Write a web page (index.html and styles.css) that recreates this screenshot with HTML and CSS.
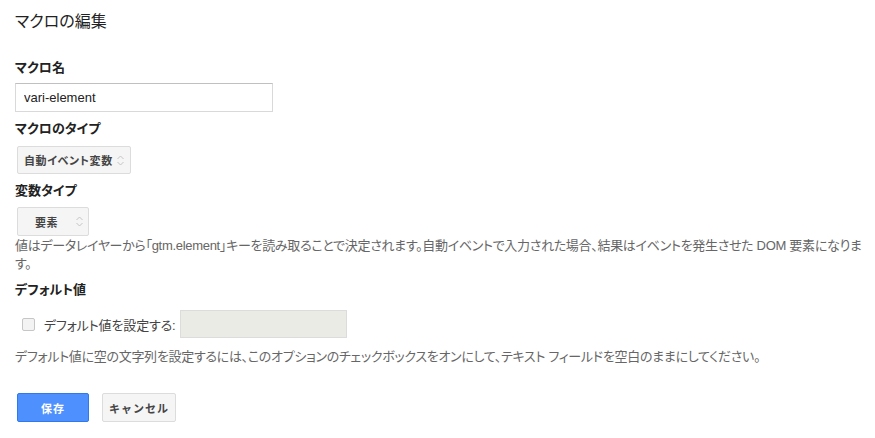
FILE: index.html
```html
<!DOCTYPE html>
<html lang="ja">
<head>
    <meta charset="UTF-8">
    <meta name="viewport" content="width=device-width, initial-scale=1.0">
    <title>マクロの編集</title>
    <link rel="stylesheet" href="styles.css">
</head>
<body>
    <div class="page">
        <h1 class="page-title">マクロの編集</h1>

        <div class="field-label first">マクロ名</div>
        <input class="text-input" type="text" value="vari-element">

        <div class="field-label">マクロのタイプ</div>
        <div class="select-button type-select">
            <span>自動イベント変数</span>
            <svg class="arrows" width="7" height="11" viewBox="0 0 7 11">
                <path d="M0.5 4 L3.5 1 L6.5 4 M0.5 7 L3.5 10 L6.5 7" fill="none" stroke="#c4c4c4" stroke-width="1"/>
            </svg>
        </div>

        <div class="field-label">変数タイプ</div>
        <div class="select-button var-select">
            <span>要素</span>
            <svg class="arrows" width="7" height="11" viewBox="0 0 7 11">
                <path d="M0.5 4 L3.5 1 L6.5 4 M0.5 7 L3.5 10 L6.5 7" fill="none" stroke="#c4c4c4" stroke-width="1"/>
            </svg>
        </div>
        <p class="description">値はデータレイヤーから「gtm.element」キーを読み取ることで決定されます。自動イベントで入力された場合、結果はイベントを発生させた DOM 要素になりま<br>す。</p>

        <div class="field-label">デフォルト値</div>
        <div class="default-row">
            <span class="checkbox"></span>
            <span class="default-label">デフォルト値を設定する:</span>
            <input class="text-input disabled-input" type="text" disabled>
        </div>
        <p class="help">デフォルト値に空の文字列を設定するには、このオプションのチェックボックスをオンにして、テキスト フィールドを空白のままにしてください。</p>

        <div class="actions">
            <button class="btn btn-primary">保存</button>
            <button class="btn btn-default">キャンセル</button>
        </div>
    </div>
</body>
</html>
```

FILE: styles.css
```css
body {
    margin: 0;
    padding: 0;
    background-color: #fff;
    font-family: "Liberation Sans", "Noto Sans CJK JP", sans-serif;
    font-feature-settings: "palt";
    color: #222;
}

.page {
    padding: 12px 10px 0 15px;
}

.page-title {
    margin: 0;
    font-size: 16px;
    line-height: 20px;
    font-weight: normal;
    color: #222;
}

.field-label {
    margin-top: 8px;
    font-size: 13px;
    line-height: 18px;
    font-weight: bold;
    color: #222;
}

.field-label.first {
    margin-top: 27px;
}

.text-input {
    display: block;
    box-sizing: border-box;
    width: 258px;
    height: 29px;
    margin-top: 6px;
    padding: 0 8px;
    border: 1px solid #d9d9d9;
    border-top-color: #c0c0c0;
    font-family: "Liberation Sans", "Noto Sans CJK JP", sans-serif;
    font-size: 13px;
    color: #222;
    outline: none;
}

.select-button {
    display: flex;
    align-items: center;
    box-sizing: border-box;
    height: 28px;
    margin-top: 8px;
    margin-left: 2px;
    border: 1px solid #dcdcdc;
    border-radius: 2px;
    background-color: #f5f5f5;
    font-size: 11px;
    font-weight: bold;
    letter-spacing: 0.6px;
    color: #444;
}

.type-select {
    width: 114px;
    padding: 0 6px 0 6px;
    justify-content: space-between;
}

.var-select {
    width: 72px;
    height: 29px;
    margin-top: 7px;
    padding: 0 5px 0 17px;
    justify-content: space-between;
}

.arrows {
    display: block;
}

.description {
    margin: 1px 0 0 0;
    font-size: 13px;
    line-height: 18px;
    letter-spacing: -0.3px;
    white-space: nowrap;
    color: #666;
}

.default-row {
    display: flex;
    align-items: center;
    height: 28px;
    margin-top: 11px;
}

.checkbox {
    box-sizing: border-box;
    width: 13px;
    height: 13px;
    margin-left: 7px;
    border: 1px solid #c6c6c6;
    border-radius: 2px;
    background-color: #f3f3f3;
}

.default-label {
    margin-left: 9px;
    font-size: 13px;
    letter-spacing: -0.15px;
    color: #444;
}

.disabled-input {
    width: 167px;
    height: 28px;
    margin-top: 0;
    margin-left: 4px;
    background-color: #ebebe6;
    border-color: #dcdcdc;
}

.help {
    margin: 10px 0 0 0;
    font-size: 13px;
    line-height: 18px;
    letter-spacing: -0.3px;
    color: #666;
}

.actions {
    display: flex;
    gap: 13px;
    margin-top: 27px;
    margin-left: 2px;
}

.btn {
    box-sizing: border-box;
    height: 29px;
    padding: 0;
    border-radius: 2px;
    font-family: "Liberation Sans", "Noto Sans CJK JP", sans-serif;
    font-size: 11px;
    font-weight: bold;
    letter-spacing: 1px;
    cursor: pointer;
}

.btn-primary {
    width: 72px;
    background-color: #4d90fe;
    border: 1px solid #3079ed;
    color: #fff;
}

.btn-default {
    width: 74px;
    background-color: #f5f5f5;
    border: 1px solid #dcdcdc;
    color: #444;
}
```
